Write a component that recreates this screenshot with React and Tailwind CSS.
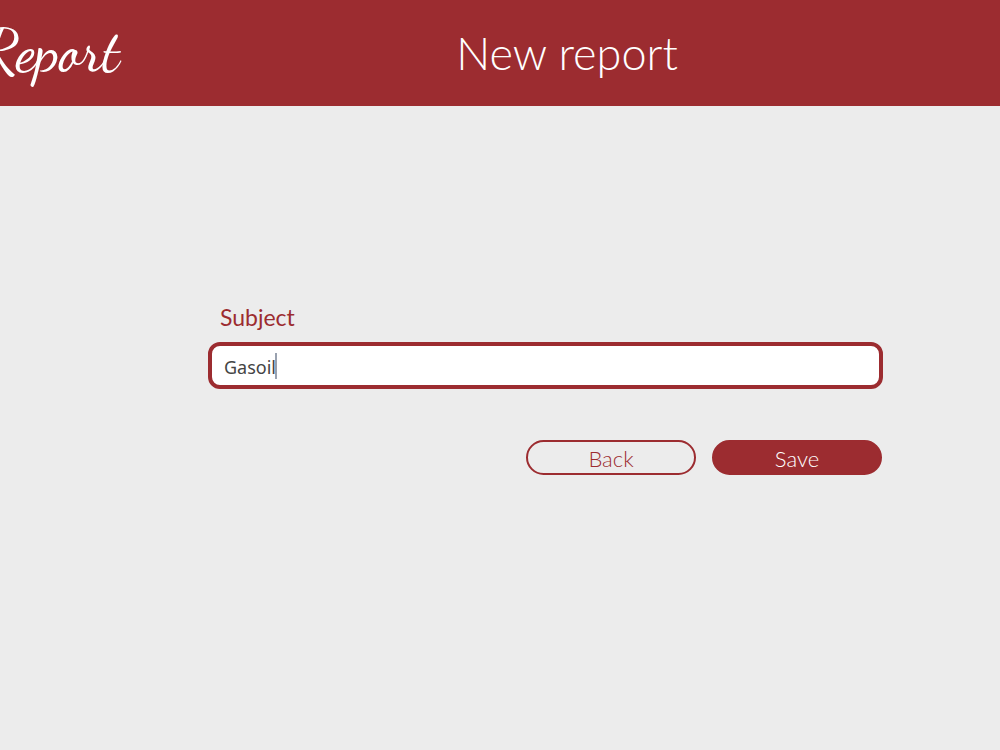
import React, { useState } from "react";

function Header({ title }) {
  return (
    <header className="relative flex h-[106px] items-center justify-center overflow-hidden bg-[#9c2c30] pl-[134px] text-white">
      <a
        href="#home"
        className="absolute top-5 -left-4 font-['Dancing_Script',cursive] text-[58px] leading-[64px] font-medium"
      >
        Report
      </a>
      <h1 className="font-['Lato',sans-serif] text-[45px] leading-[64px] font-light">
        {title}
      </h1>
    </header>
  );
}

export default function App() {
  const [subject, setSubject] = useState("Gasoil");

  const handleSubmit = (e) => {
    e.preventDefault();
  };

  return (
    <div className="min-h-screen bg-[#ececec] font-['Lato',sans-serif]">
      <Header title="New report" />

      <main className="pt-[195px] pr-[117px] pl-[208px]">
        <form onSubmit={handleSubmit}>
          <label
            htmlFor="subject"
            className="block pl-3 text-[23px] leading-8 font-normal text-[#9c2c30]"
          >
            Subject
          </label>
          <div className="relative mt-[9px]">
            <input
              id="subject"
              name="subject"
              value={subject}
              onChange={(e) => setSubject(e.target.value)}
              className="block h-[47px] w-full rounded-xl border-4 border-[#9c2c30] bg-white px-3 pt-0.5 font-['Noto_Sans',sans-serif] text-lg text-[#444444] caret-transparent outline-none"
            />
            {/* text cursor */}
            <span className="pointer-events-none absolute top-[11px] left-[67px] h-[26px] w-0.5 bg-gray-400" />
          </div>

          <div className="mt-[51px] flex justify-end gap-4 pr-px">
            <button
              type="button"
              className="h-[35px] w-[170px] rounded-full border-2 border-[#9c2c30] pt-0.5 text-[22px] leading-7 font-light text-[#9c2c30]"
            >
              Back
            </button>
            <button
              type="submit"
              className="h-[35px] w-[170px] rounded-full border-2 border-[#9c2c30] bg-[#9c2c30] pt-0.5 text-[22px] leading-7 font-light text-white"
            >
              Save
            </button>
          </div>
        </form>
      </main>
    </div>
  );
}
